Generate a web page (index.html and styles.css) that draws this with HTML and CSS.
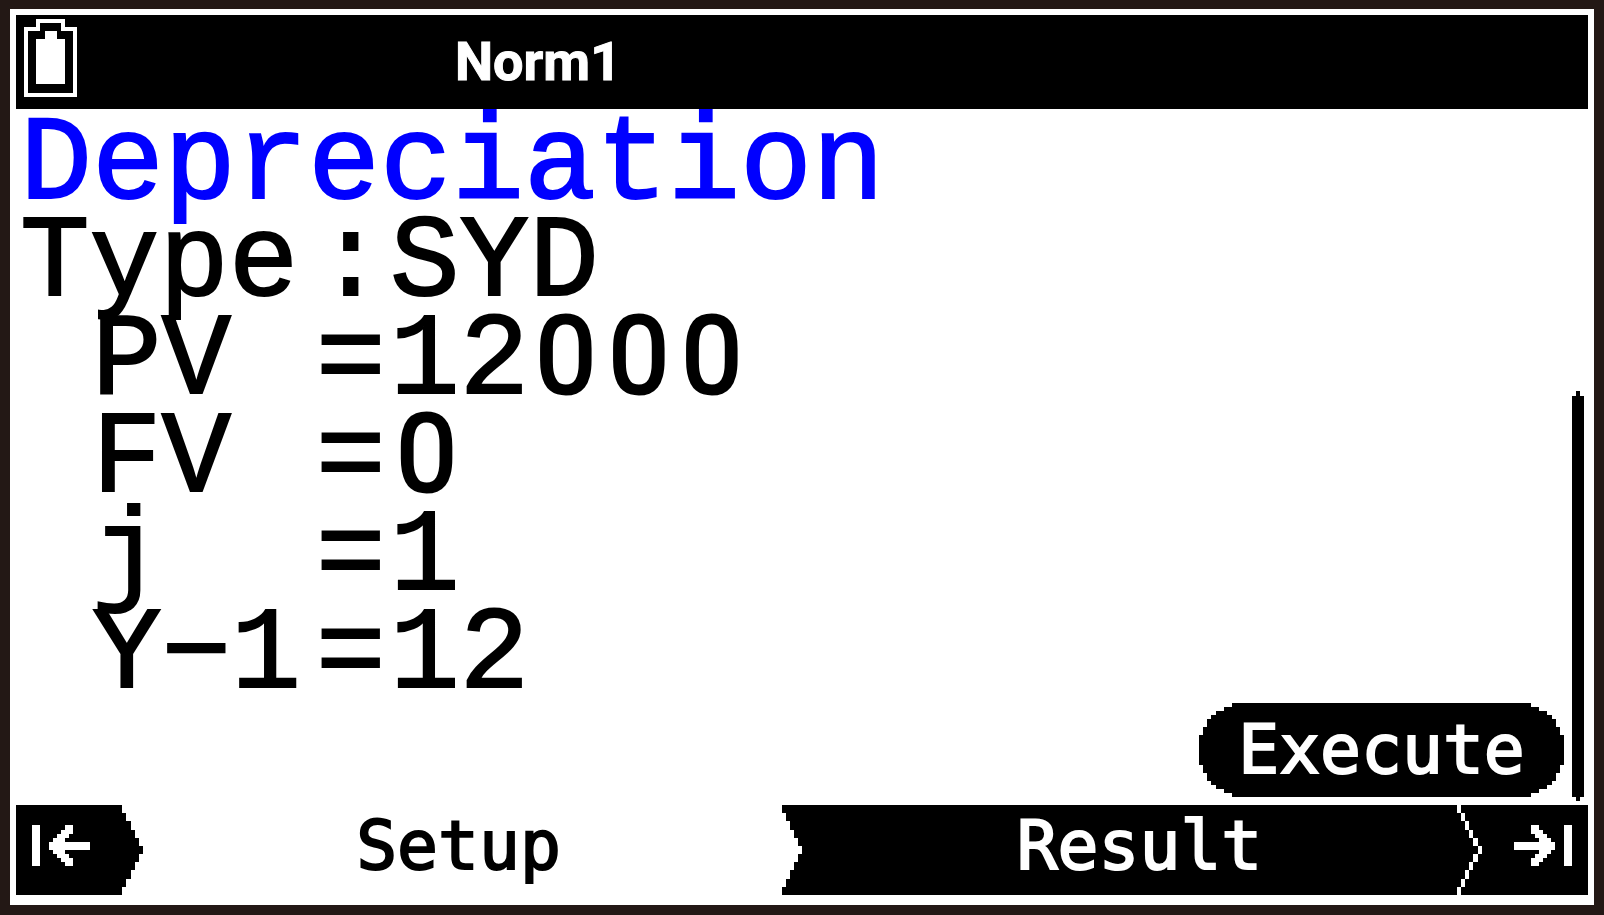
FILE: index.html
```html
<!DOCTYPE html>
<html lang="en">
<head>
    <meta charset="UTF-8">
    <meta name="viewport" content="width=device-width, initial-scale=1.0">
    <title>Depreciation</title>
    <link rel="stylesheet" href="styles.css">
</head>
<body>

<div class="screen">
    <header class="status-bar">
        <svg class="battery" viewBox="24 19 53 78" width="53" height="78" role="img" aria-label="Battery full">
            <path fill-rule="evenodd" d="M36 19H65V27H77V97H24V27H36Z M40 23V31H28V93H73V31H61V23Z"/>
            <path d="M45 31H57V39H65V84H36V39H45Z"/>
        </svg>
        <span class="mode">Norm1</span>
    </header>

    <main class="content">
        <div class="lines">
            <h1 class="title">Depreciation</h1>
            <div class="line">
                <span>Type</span><span>:</span><span>SYD</span>
            </div>
            <div class="line">
                <span class="name">PV</span><span>=</span>
                <span>12<span class="zero">0</span><span class="zero">0</span><span class="zero">0</span></span>
            </div>
            <div class="line">
                <span class="name">FV</span><span>=</span><span><span class="zero">0</span></span>
            </div>
            <div class="line">
                <span class="name">j</span><span>=</span><span>1</span>
            </div>
            <div class="line">
                <span class="name">Y−1</span><span>=</span><span>12</span>
            </div>
        </div>
        <button type="button" class="execute">Execute</button>
        <div class="scrollbar"></div>
    </main>

    <nav class="tabs">
        <button type="button" class="tab-first" aria-label="First tab">
            <svg viewBox="0 0 127 90" width="127" height="90">
                <path class="ink" d="M0 0H106V8H110V16H115V25H119V33H123V41H127V49H123V57H119V65H115V74H110V82H106V90H0Z"/>
                <path class="paper" d="M16 20H24V61H16Z"/>
                <path class="paper" d="M33 37H37V33H41V29H45V25H49V20H57V29H53V33H49V37H74V45H49V49H53V53H57V61H49V57H45V53H41V49H37V45H33Z"/>
            </svg>
        </button>
        <button type="button" class="tab">Setup</button>
        <button type="button" class="tab tab-result">
            <svg class="notch" viewBox="0 0 20 90" width="20" height="90">
                <path class="paper" d="M0 8H4V16H8V25H12V33H16V41H20V49H16V57H12V65H8V74H4V82H0Z"/>
            </svg>
            <span>Result</span>
        </button>
        <button type="button" class="tab-last" aria-label="Last tab">
            <svg viewBox="0 0 131 90" width="131" height="90">
                <path class="paper" d="M0 0H4V8H0Z M4 8H8V16H4Z M8 16H12V25H8Z M12 25H16V33H12Z M16 33H21V41H16Z M21 41H25V49H21Z M16 49H21V57H16Z M12 57H16V65H12Z M8 65H12V74H8Z M4 74H8V82H4Z M0 82H4V90H0Z"/>
                <path class="paper" d="M107 20H115V61H107Z"/>
                <path class="paper" d="M98 37H94V33H90V29H86V25H82V20H74V29H78V33H82V37H57V45H82V49H78V53H74V61H82V57H86V53H90V49H94V45H98Z"/>
            </svg>
        </button>
    </nav>
</div>

</body>
</html>
```
FILE: styles.css
```css
* {
    box-sizing: border-box;
}

body {
    margin: 0;
    padding: 9px 10px 10px;
    min-height: 100vh;
    display: flex;
    background-color: #231815;
    color: #000;
}

button {
    margin: 0;
    padding: 0;
    border: 0;
    background: none;
    color: inherit;
    cursor: pointer;
}

svg {
    display: block;
    shape-rendering: crispEdges;
}

.screen {
    flex: 1;
    display: flex;
    flex-direction: column;
    padding: 6px 6px 10px;
    background-color: #fff;
}

/* Status bar */
.status-bar {
    display: flex;
    align-items: center;
    height: 94px;
    padding: 0 8px;
    background-color: #000;
    color: #fff;
}

.battery {
    fill: #fff;
    margin-bottom: 8px;
}

.mode {
    margin-left: 378px;
    font: bold 54px/94px "Roboto", sans-serif;
    -webkit-text-stroke: 1px currentColor;
}

/* Content */
.content {
    flex: 1;
    display: flex;
    align-items: flex-end;
    font-family: "Liberation Mono", monospace;
}

.lines {
    flex: 1;
    align-self: flex-start;
    padding: 8px 0 0 4px;
}

.title,
.line {
    margin: 0;
    font-size: 116px;
    font-weight: normal;
    line-height: 98px;
    -webkit-text-stroke: 2px currentColor;
}

.title {
    font-size: 120px;
    color: #00f;
}

/* name, separator, value */
.line {
    display: grid;
    grid-template-columns: 296px 74px 1fr;
    height: 98px;
}

.name {
    padding-left: 72px;
}

/* plain zero, one character cell wide */
.zero {
    display: inline-block;
    width: 73px;
    font-family: "Roboto", sans-serif;
    font-size: 108px;
    line-height: 80px;
    text-align: center;
    -webkit-text-stroke: 3px currentColor;
}

.execute {
    width: 365px;
    height: 94px;
    margin-bottom: 8px;
    background-color: #000;
    color: #fff;
    font: 68px/94px "DejaVu Sans Mono", monospace;
    -webkit-text-stroke: 2px currentColor;
    clip-path: polygon(
        33px 0, calc(100% - 33px) 0, calc(100% - 33px) 4px, calc(100% - 25px) 4px,
        calc(100% - 25px) 8px, calc(100% - 17px) 8px, calc(100% - 17px) 12px, calc(100% - 12px) 12px,
        calc(100% - 12px) 16px, calc(100% - 8px) 16px, calc(100% - 8px) 24px, calc(100% - 4px) 24px,
        calc(100% - 4px) 32px, 100% 32px, 100% 62px, calc(100% - 4px) 62px,
        calc(100% - 4px) 70px, calc(100% - 8px) 70px, calc(100% - 8px) 78px, calc(100% - 12px) 78px,
        calc(100% - 12px) 82px, calc(100% - 17px) 82px, calc(100% - 17px) 86px, calc(100% - 25px) 86px,
        calc(100% - 25px) 90px, calc(100% - 33px) 90px, calc(100% - 33px) 100%, 33px 100%,
        33px 90px, 25px 90px, 25px 86px, 17px 86px, 17px 82px, 12px 82px, 12px 78px, 8px 78px,
        8px 70px, 4px 70px, 4px 62px, 0 62px, 0 32px, 4px 32px, 4px 24px, 8px 24px,
        8px 16px, 12px 16px, 12px 12px, 17px 12px, 17px 8px, 25px 8px, 25px 4px, 33px 4px
    );
}

.scrollbar {
    align-self: stretch;
    width: 12px;
    margin: 282px 4px 4px 8px;
    background-color: #000;
    clip-path: polygon(
        4px 0, 8px 0, 8px 5px, 100% 5px, 100% calc(100% - 4px), 8px calc(100% - 4px),
        8px 100%, 4px 100%, 4px calc(100% - 4px), 0 calc(100% - 4px), 0 5px, 4px 5px
    );
}

/* Tabs */
.tabs {
    display: grid;
    grid-template-columns: 127px 639fr 675fr 131px;
    height: 90px;
}

.tab {
    padding: 0 8px 8px 0;
    font: 68px/80px "DejaVu Sans Mono", monospace;
    -webkit-text-stroke: 2px currentColor;
}

.tab-result {
    display: flex;
    align-items: center;
    padding: 0;
    background-color: #000;
    color: #fff;
}

.tab-result span {
    flex: 1;
    padding: 0 0 8px 20px;
}

.tab-last {
    background-color: #000;
}

.ink {
    fill: #000;
}

.paper {
    fill: #fff;
}
```
